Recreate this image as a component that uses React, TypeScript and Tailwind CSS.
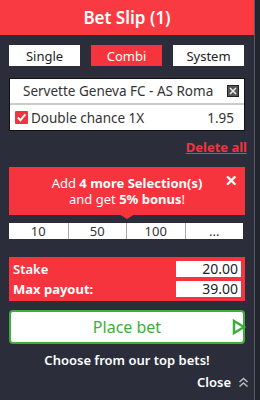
import React from "react";

// Bet slip panel (combi mode, one selection)

const tabs = [
  { label: "Single", active: false },
  { label: "Combi", active: true },
  { label: "System", active: false },
];

const quickStakes = ["10", "50", "100", "..."];

const Tab = ({ label, active }: { label: string; active: boolean }) => (
  <div
    className={
      active
        ? "w-[71px] h-[21px] flex items-center justify-center bg-[#f5343d] text-white text-[13px] leading-[16px]"
        : "w-[71px] h-[21px] flex items-center justify-center bg-white text-[#222] text-[13px] leading-[16px]"
    }
  >
    {label}
  </div>
);

const BoxedX = () => (
  <svg width="12" height="12" viewBox="0 0 12 12">
    <rect x="0.5" y="0.5" width="11" height="11" fill="#555" stroke="#222" />
    <path d="M3 3 L9 9 M9 3 L3 9" stroke="#eee" strokeWidth="1.5" />
  </svg>
);

const CheckBox = () => (
  <svg width="13" height="13" viewBox="0 0 13 13">
    <rect x="0" y="0" width="13" height="13" rx="1" fill="#ef3340" />
    <path d="M2.8 6.5 L5.4 9.3 L10.3 3.4" stroke="white" strokeWidth="2" fill="none" />
  </svg>
);

const Selection = () => (
  <div className="mt-[12px] mx-[9px] bg-white border border-[#111] text-[#333]">
    <div className="h-[26px] flex items-center pl-[13px] pr-[5px] border-b-2 border-[#ccc]">
      <span className="flex-1 text-[13.5px] leading-[16px]">Servette Geneva FC - AS Roma</span>
      <BoxedX />
    </div>
    <div className="h-[25px] flex items-center pl-[5px] pr-[10px]">
      <CheckBox />
      <span className="flex-1 ml-[3px] text-[13.5px] leading-[16px]">Double chance 1X</span>
      <span className="text-[13.5px] leading-[16px]">1.95</span>
    </div>
  </div>
);

const BonusBanner = () => (
  <div className="relative mt-[12px] mx-[9px]">
    <div className="h-[48px] bg-[#f5343d] text-white text-[13px] leading-[16px] flex flex-col items-center justify-center">
      <span>
        Add <b>4 more Selection(s)</b>
      </span>
      <span>
        and get <b>5% bonus</b>!
      </span>
    </div>
    <span className="absolute right-[7px] top-[4px] text-white text-[15px] leading-[18px] font-bold">✕</span>
    <div className="absolute left-1/2 -translate-x-1/2 top-[47px] w-0 h-0 border-l-[8px] border-r-[8px] border-t-[5px] border-l-transparent border-r-transparent border-t-[#f5343d]" />
  </div>
);

const QuickStakes = () => (
  <div className="mt-[8px] ml-[9px] mr-[11px] grid grid-cols-4 bg-white h-[16px]">
    {quickStakes.map((v, i) => (
      <div
        key={v}
        className={
          i === 0
            ? "flex items-center justify-center text-[13px] leading-[16px] text-[#333]"
            : "flex items-center justify-center text-[13px] leading-[16px] text-[#333] border-l border-[#aaa]"
        }
      >
        {v}
      </div>
    ))}
  </div>
);

const StakeBox = () => (
  <div className="mt-[18px] mx-[9px] bg-[#f5343d] pl-[4px] pr-[4px] py-[4px] flex flex-col gap-[4px]">
    <div className="h-[16px] flex items-center justify-between">
      <span className="text-white text-[13px] leading-[16px] font-semibold">Stake</span>
      <div className="w-[65px] h-[16px] bg-white text-right pr-[3px] text-[14px] leading-[16px] text-[#222]">
        20.00
      </div>
    </div>
    <div className="h-[16px] flex items-center justify-between">
      <span className="text-white text-[13px] leading-[16px] font-bold">Max payout:</span>
      <div className="w-[65px] h-[16px] bg-white text-right pr-[3px] text-[14px] leading-[16px] text-[#222]">
        39.00
      </div>
    </div>
  </div>
);

const PlaceBet = () => (
  <div className="relative mt-[9px] mx-[9px] h-[34px] bg-white border-2 border-[#3dae3a] rounded-[4px] flex items-center justify-center">
    <span className="text-[#3dae3a] text-[16px] leading-[20px]">Place bet</span>
    <svg className="absolute right-[-3px] top-[7px]" width="14" height="16" viewBox="0 0 14 16">
      <path d="M2 2 L12 8 L2 14 Z" fill="none" stroke="#3dae3a" strokeWidth="2.5" />
    </svg>
  </div>
);

export default function App() {
  return (
    <div
      className="w-[260px] h-[400px] flex bg-[#23252e]"
      style={{ fontFamily: '"Noto Sans", Lato, sans-serif' }}
    >
      <div className="w-[255px] h-full bg-[#2b2e3a] border-r border-[#555a66] flex flex-col">
        <div className="h-[35px] shrink-0 bg-[#f93a42] flex items-center justify-center text-white text-[17px] leading-[20px] font-semibold">
          Bet Slip (1)
        </div>
        <div className="mt-[10px] ml-[9px] mr-[10px] flex justify-between">
          {tabs.map((t) => (
            <Tab key={t.label} label={t.label} active={t.active} />
          ))}
        </div>
        <Selection />
        <div className="mt-[7px] mr-[7px] text-right leading-[16px]">
          <span className="text-[#f5343d] text-[13px] leading-[16px] font-bold underline">Delete all</span>
        </div>
        <BonusBanner />
        <QuickStakes />
        <StakeBox />
        <PlaceBet />
        <div className="mt-[8px] text-center text-white text-[13px] leading-[16px] font-semibold">
          Choose from our top bets!
        </div>
        <div className="mt-[6px] mr-[5px] flex items-center justify-end gap-[7px] text-white text-[13px] leading-[16px] font-semibold">
          <span>Close</span>
          <svg width="11" height="11" viewBox="0 0 11 11">
            <path d="M1.5 5 L5.5 1.5 L9.5 5 M1.5 9.5 L5.5 6 L9.5 9.5" stroke="#bbb" strokeWidth="1.6" fill="none" />
          </svg>
        </div>
      </div>
    </div>
  );
}
